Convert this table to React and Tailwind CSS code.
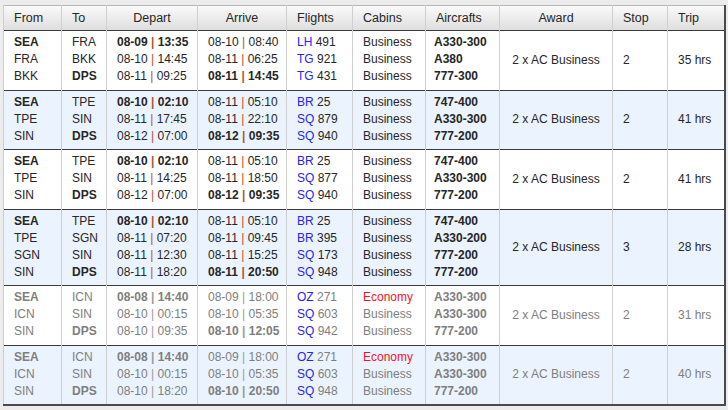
import React from 'react';

const trips = [
  {
    legs: [
      ['SEA', 'FRA', '08-09', '13:35', '08-10', '08:40', 'LH', '491', 'Business', 'A330-300'],
      ['FRA', 'BKK', '08-10', '14:45', '08-11', '06:25', 'TG', '921', 'Business', 'A380'],
      ['BKK', 'DPS', '08-11', '09:25', '08-11', '14:45', 'TG', '431', 'Business', '777-300'],
    ],
    stop: '2',
    trip: '35 hrs',
  },
  {
    legs: [
      ['SEA', 'TPE', '08-10', '02:10', '08-11', '05:10', 'BR', '25', 'Business', '747-400'],
      ['TPE', 'SIN', '08-11', '17:45', '08-11', '22:10', 'SQ', '879', 'Business', 'A330-300'],
      ['SIN', 'DPS', '08-12', '07:00', '08-12', '09:35', 'SQ', '940', 'Business', '777-200'],
    ],
    stop: '2',
    trip: '41 hrs',
  },
  {
    legs: [
      ['SEA', 'TPE', '08-10', '02:10', '08-11', '05:10', 'BR', '25', 'Business', '747-400'],
      ['TPE', 'SIN', '08-11', '14:25', '08-11', '18:50', 'SQ', '877', 'Business', 'A330-300'],
      ['SIN', 'DPS', '08-12', '07:00', '08-12', '09:35', 'SQ', '940', 'Business', '777-200'],
    ],
    stop: '2',
    trip: '41 hrs',
  },
  {
    legs: [
      ['SEA', 'TPE', '08-10', '02:10', '08-11', '05:10', 'BR', '25', 'Business', '747-400'],
      ['TPE', 'SGN', '08-11', '07:20', '08-11', '09:45', 'BR', '395', 'Business', 'A330-200'],
      ['SGN', 'SIN', '08-11', '12:30', '08-11', '15:25', 'SQ', '173', 'Business', '777-200'],
      ['SIN', 'DPS', '08-11', '18:20', '08-11', '20:50', 'SQ', '948', 'Business', '777-200'],
    ],
    stop: '3',
    trip: '28 hrs',
  },
  {
    muted: true,
    legs: [
      ['SEA', 'ICN', '08-08', '14:40', '08-09', '18:00', 'OZ', '271', 'Economy', 'A330-300'],
      ['ICN', 'SIN', '08-10', '00:15', '08-10', '05:35', 'SQ', '603', 'Business', 'A330-300'],
      ['SIN', 'DPS', '08-10', '09:35', '08-10', '12:05', 'SQ', '942', 'Business', '777-200'],
    ],
    stop: '2',
    trip: '31 hrs',
  },
  {
    muted: true,
    legs: [
      ['SEA', 'ICN', '08-08', '14:40', '08-09', '18:00', 'OZ', '271', 'Economy', 'A330-300'],
      ['ICN', 'SIN', '08-10', '00:15', '08-10', '05:35', 'SQ', '603', 'Business', 'A330-300'],
      ['SIN', 'DPS', '08-10', '18:20', '08-10', '20:50', 'SQ', '948', 'Business', '777-200'],
    ],
    stop: '2',
    trip: '40 hrs',
  },
];

const headers = [
  ['From', 'w-[58px]', 'text-left'],
  ['To', 'w-[45px]', 'text-left'],
  ['Depart', 'w-[91px]', 'text-center'],
  ['Arrive', 'w-[89px]', 'text-center'],
  ['Flights', 'w-[66px]', 'text-left'],
  ['Cabins', 'w-[73px]', 'text-left'],
  ['Aircrafts', 'w-[74px]', 'text-left'],
  ['Award', 'w-[113px]', 'text-center'],
  ['Stop', 'w-[55px]', 'text-left'],
  ['Trip', 'w-[57px]', 'text-left'],
];

const cell = 'border-x border-[#cfcfcf] px-[10px] pt-[3px] pb-[4.5px] align-top whitespace-nowrap';
const mid = 'border-x border-[#cfcfcf] px-[10px] align-middle whitespace-nowrap';

const When = ({ day, time, bold, muted }) => (
  <div className={bold ? 'font-bold' : ''}>
    {day} <span className={muted ? 'text-[#9a9a9a]' : 'text-[#b4502f]'}>|</span> {time}
  </div>
);

const TripRow = ({ t, idx }) => {
  const last = t.legs.length - 1;
  const bg = idx % 2 === 0 ? 'bg-white' : 'bg-[#ebf4fe]';
  const text = t.muted ? 'text-[#7e7e7e]' : 'text-[#262626]';
  return (
    <tr className={`${bg} ${text} border-b border-[#3a3a3a]`}>
      <td className={cell}>
        {t.legs.map((l, i) => (
          <div key={i} className={i === 0 ? 'font-bold' : ''}>{l[0]}</div>
        ))}
      </td>
      <td className={cell}>
        {t.legs.map((l, i) => (
          <div key={i} className={i === last ? 'font-bold' : ''}>{l[1]}</div>
        ))}
      </td>
      <td className={cell}>
        {t.legs.map((l, i) => (
          <When key={i} day={l[2]} time={l[3]} bold={i === 0} muted={t.muted} />
        ))}
      </td>
      <td className={cell}>
        {t.legs.map((l, i) => (
          <When key={i} day={l[4]} time={l[5]} bold={i === last} muted={t.muted} />
        ))}
      </td>
      <td className={cell}>
        {t.legs.map((l, i) => (
          <div key={i}>
            <span className="text-[#2424f5]">{l[6]}</span> {l[7]}
          </div>
        ))}
      </td>
      <td className={cell}>
        {t.legs.map((l, i) => (
          <div key={i} className={l[8] === 'Economy' ? 'text-[#f5141e]' : ''}>{l[8]}</div>
        ))}
      </td>
      <td className={`${cell} pl-[8px]`}>
        {t.legs.map((l, i) => (
          <div key={i} className="font-bold">{l[9]}</div>
        ))}
      </td>
      <td className={`${mid} text-center`}>2 x AC Business</td>
      <td className={mid}>{t.stop}</td>
      <td className={mid}>{t.trip}</td>
    </tr>
  );
};

export default function App() {
  return (
    <div className="w-[728px] h-[410px] bg-[#ececec] pl-[3px] pt-[5px] overflow-hidden">
      <table
        className="table-fixed border-collapse w-[722px] text-[12px] leading-[17px] border-t border-t-[#b5b5b5] border-l border-l-[#5a5a5a] border-r-2 border-r-[#4a4a4a] border-b-2 border-b-[#4a4a4a]"
        style={{ fontFamily: '"Liberation Sans", Arial, sans-serif' }}
      >
        <thead>
          <tr className="h-[25px] bg-gradient-to-b from-[#fafafa] to-[#dedede] text-[#262626] border-b border-[#3a3a3a]">
            {headers.map(([h, w, a]) => (
              <th key={h} className={`${w} ${a} font-normal text-[12.5px] border-x border-[#cfcfcf] px-[10px] align-middle whitespace-nowrap`}>
                {h}
              </th>
            ))}
          </tr>
        </thead>
        <tbody>
          {trips.map((t, i) => (
            <TripRow key={i} t={t} idx={i} />
          ))}
        </tbody>
      </table>
    </div>
  );
}
